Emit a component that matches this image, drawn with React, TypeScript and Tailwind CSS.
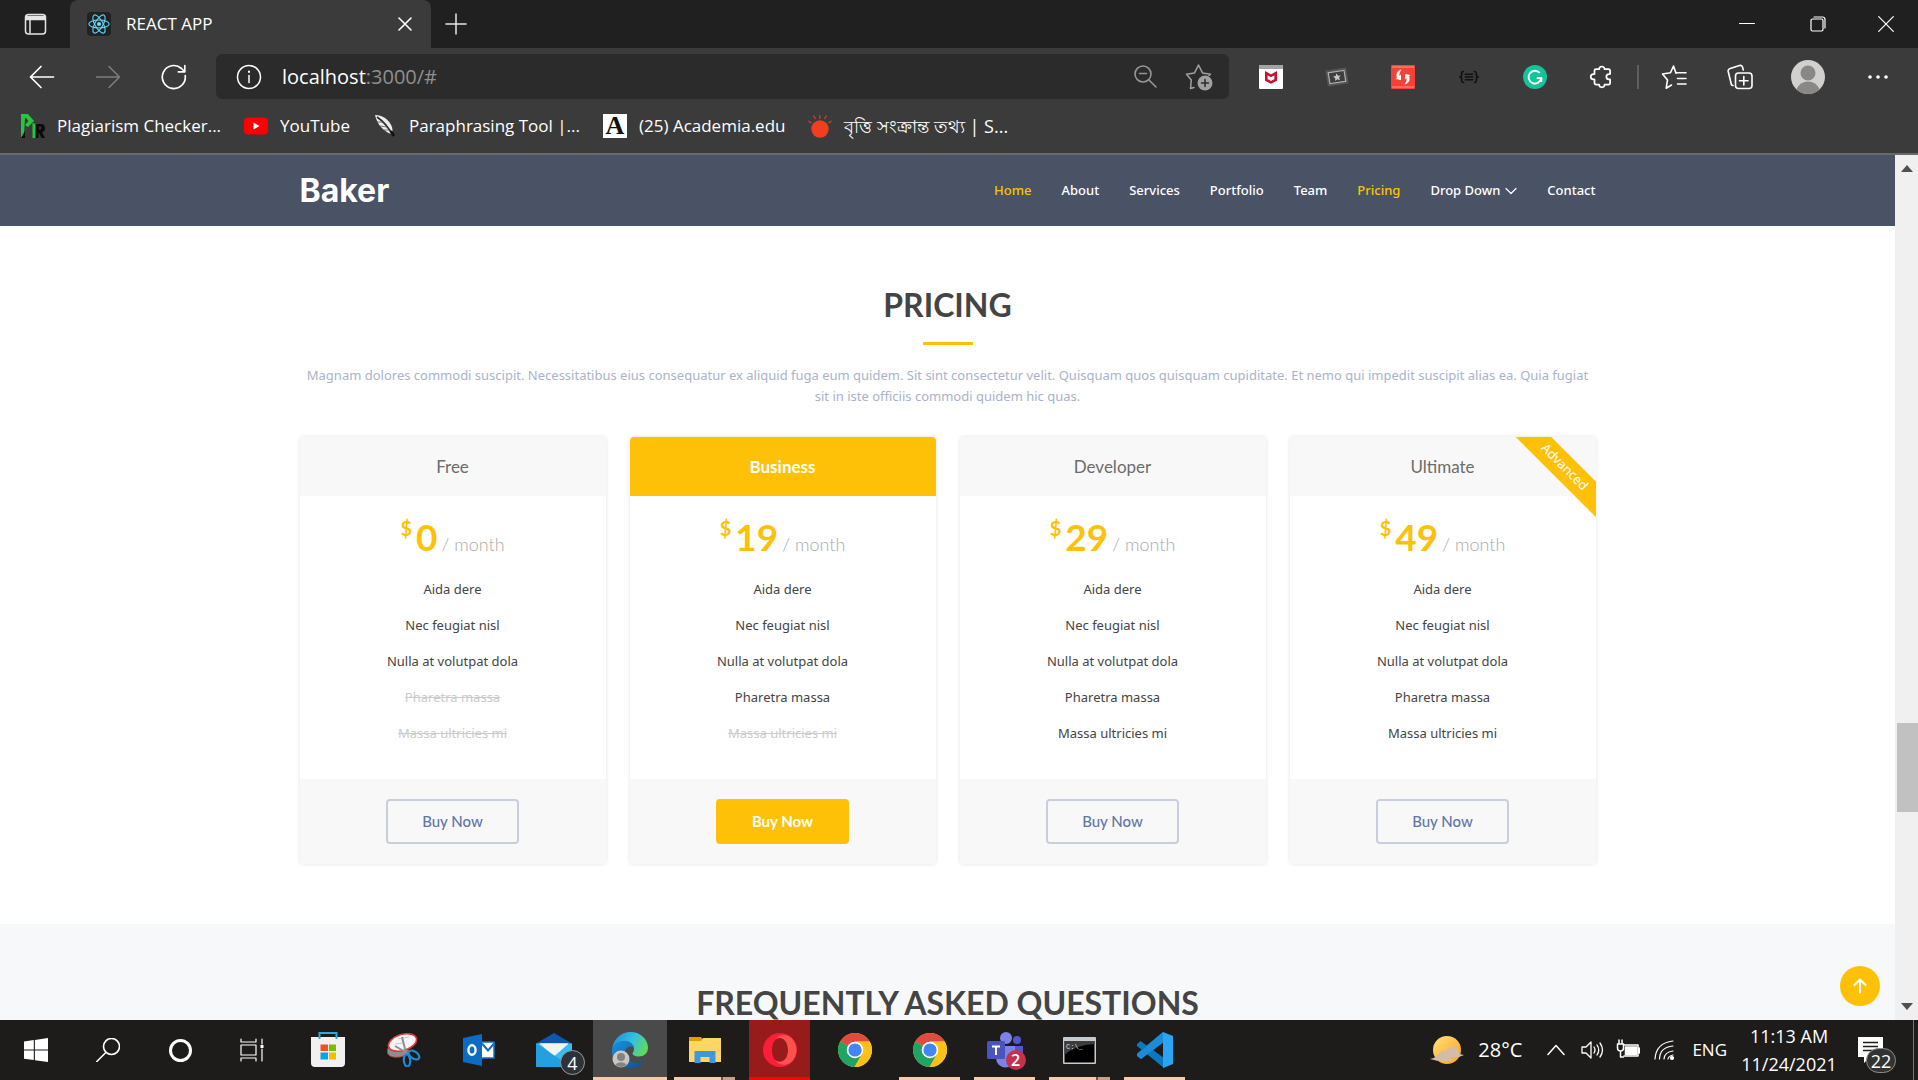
import React from "react";

const UI = "font-['Open_Sans','Noto_Sans',sans-serif]";

/* ---------- browser icons ---------- */

type IconProps = { className?: string; children: React.ReactNode; size?: number; box?: string; w?: number };

function Line({ className = "", children, size = 24, box = "0 0 24 24", w = 1.5 }: IconProps) {
  return (
    <svg aria-hidden="true" className={className} width={size} height={size} viewBox={box} fill="none" stroke="currentColor" strokeWidth={w} strokeLinecap="round" strokeLinejoin="round">
      {children}
    </svg>
  );
}

const ReactLogo = () => (
  <svg aria-hidden="true" width="24" height="24" viewBox="0 0 24 24" className="rounded-sm bg-[#222222]">
    <circle cx="12" cy="12" r="2.1" fill="#61dafb" />
    <g fill="none" stroke="#61dafb" strokeWidth="1.1">
      <ellipse cx="12" cy="12" rx="10.2" ry="4" />
      <ellipse cx="12" cy="12" rx="10.2" ry="4" transform="rotate(60 12 12)" />
      <ellipse cx="12" cy="12" rx="10.2" ry="4" transform="rotate(120 12 12)" />
    </g>
  </svg>
);

function TitleBar() {
  return (
    <div className="flex h-12 shrink-0 items-stretch bg-[#202020] text-white">
      <button aria-label="Tab actions" className="flex w-[70px] items-center justify-center text-[#e6e6e6]">
        <Line size={24} w={1.5}>
          <rect x="2.5" y="2.5" width="20" height="19.5" rx="3" />
          <path d="M3 4.5h19v3H3z" fill="currentColor" />
          <path d="M7 8v13" />
        </Line>
      </button>
      <div className="flex w-[361px] items-center rounded-t-lg bg-[#3b3b3b] pl-[17px] pr-2">
        <ReactLogo />
        <span className="ml-[15px] flex-1 text-[17px]">REACT APP</span>
        <button aria-label="Close tab" className="flex w-9 justify-center">
          <Line size={14} box="0 0 14 14" w={1.6}><path d="M1 1l12 12M13 1L1 13" /></Line>
        </button>
      </div>
      <button aria-label="New tab" className="flex w-[50px] items-center justify-center text-[#e6e6e6]">
        <Line size={22} box="0 0 22 22" w={1.5}><path d="M11 1v20M1 11h20" /></Line>
      </button>
      <div className="flex-1" />
      <button aria-label="Minimize" className="flex w-[70px] items-center justify-center">
        <Line size={16} box="0 0 16 16" w={1}><path d="M.5 7.5h15" /></Line>
      </button>
      <button aria-label="Restore" className="flex w-[72px] items-center justify-center">
        <Line size={16} box="0 0 16 16" w={1.2}>
          <rect x="1" y="3" width="12" height="12" rx="1.5" />
          <path d="M4 1h8.500a2.500 2.500 0 0 1 2.500 2.500V12" />
        </Line>
      </button>
      <button aria-label="Close" className="flex w-16 items-center justify-center">
        <Line size={16} box="0 0 16 16" w={1.2}><path d="M.7.7l14.600 14.600M15.300.7L.7 15.300" /></Line>
      </button>
    </div>
  );
}

const extensions: { name: string; icon: React.ReactNode }[] = [
  {
    name: "Web advisor",
    icon: (
      <svg aria-hidden="true" width="24" height="24" viewBox="0 0 24 24">
        <rect width="24" height="24" rx="1" fill="#fff" />
        <rect width="24" height="4" rx="1" fill="#a7a2a3" />
        <path d="M7.300 8.200l4.700 2.600 4.700-2.600v6.800L12 17.400 7.300 15z" fill="none" stroke="#c8102e" strokeWidth="2.600" />
      </svg>
    ),
  },
  {
    name: "Bookmark card",
    icon: (
      <svg aria-hidden="true" width="24" height="20" viewBox="0 0 24 20">
        <g transform="rotate(-9 12 10)">
          <rect x="1.500" y="2" width="21" height="16" rx="1" fill="#555" />
          <rect x="4" y="4.500" width="16" height="11" fill="#3d3d3d" stroke="#b0b0b0" strokeWidth="1.200" />
          <path d="M12 6.300l1.200 2.500 2.700.3-2 1.800.6 2.700-2.500-1.400-2.400 1.400.5-2.700-2-1.800 2.700-.3z" fill="#c8c8c8" />
        </g>
      </svg>
    ),
  },
  {
    name: "Paraphraser",
    icon: (
      <svg aria-hidden="true" width="24" height="24" viewBox="0 0 24 24">
        <rect width="24" height="24" rx="1" fill="#f44336" />
        <path d="M1 2h22M1 22h22" stroke="#f9988f" />
        <path d="M10.500 4.500C6 5.500 4.500 9.500 6 13l-1.500 1 5.500 1V9.500L8.600 11C8 8.500 9 6.500 10.500 4.500z" fill="#fff" />
        <path d="M13.500 19.500c4.500-1 6-5 4.500-8.500l1.500-1-5.500-1v5.500l1.400-1.500c.6 2.500-.4 4.500-1.900 6.500z" fill="#fff" />
      </svg>
    ),
  },
  {
    name: "JSON viewer",
    icon: (
      <Line size={22} w={1.8} className="text-[#111111]">
        <path d="M6 6c-2 0-2 1-2 3s-.5 3-2 3c1.500 0 2 1 2 3s0 3 2 3M18 6c2 0 2 1 2 3s.5 3 2 3c-1.500 0-2 1-2 3s0 3-2 3M8 9h8M8 12h8M8 15h8" />
      </Line>
    ),
  },
  {
    name: "Writing assistant",
    icon: (
      <svg aria-hidden="true" width="24" height="24" viewBox="0 0 24 24">
        <circle cx="12" cy="12" r="12" fill="#15c39a" />
        <path d="M16.800 8A6.400 6.400 0 1 0 18.300 13h-4.600M18.300 12.600V17" fill="none" stroke="#fff" strokeWidth="1.900" />
      </svg>
    ),
  },
  {
    name: "Extensions",
    icon: (
      <Line size={26} w={1.6}>
        <path d="M7.500 4.800h2.800a2.500 2.500 0 0 1 5 0h3.600a1.500 1.500 0 0 1 1.500 1.500v3h-1a2.400 2.400 0 0 0 0 4.900h1v3.300a1.500 1.500 0 0 1-1.500 1.500h-3.600a2.500 2.500 0 0 1-5 0H7.500A1.500 1.500 0 0 1 6 17.500v-3.300H5a2.400 2.400 0 0 1 0-4.900h1v-3a1.500 1.500 0 0 1 1.500-1.500z" />
      </Line>
    ),
  },
];

function Toolbar() {
  const btn = "flex w-[66px] items-center justify-center";
  return (
    <div className="flex h-[57px] shrink-0 items-center bg-[#3b3b3b] pl-[9px] pr-[5px] text-white">
      <button aria-label="Back" className={btn}>
        <Line size={26} box="0 0 26 26" w={1.700}><path d="M24.500 13H1.500M12 2.500L1.500 13 12 23.500" /></Line>
      </button>
      <button aria-label="Forward" className={btn + " text-[#7d7d7d]"}>
        <Line size={26} box="0 0 26 26" w={1.600}><path d="M1.500 13h23M14 2.500L24.500 13 14 23.500" /></Line>
      </button>
      <button aria-label="Refresh" className={btn}>
        <Line size={26} box="0 0 26 26" w={1.700}><path d="M24.200 11.500A11.500 11.500 0 1 1 20.500 4.500L23.500 7.500M23.800 1.500v6.300h-6.500" /></Line>
      </button>
      <div className="ml-[9px] mr-[9px] flex h-[45px] flex-1 items-center rounded-md bg-[#2b2b2b] pl-5 pr-4">
        <Line size={26} box="0 0 26 26" w={1.500}><circle cx="13" cy="13" r="11.500" /><path d="M13 11.500v7" /><path d="M13 7.500v.6" strokeWidth="2" /></Line>
        <span className="ml-5 flex-1 text-[20px] text-[#8f8f8f]"><span className="text-white">localhost</span>:3000/#</span>
        <button aria-label="Zoom" className="mr-7 text-[#969696]">
          <Line size={26} box="0 0 26 26" w={1.600}><circle cx="12" cy="10" r="8" /><path d="M18 16l7 7M8.500 9.500h7" /></Line>
        </button>
        <button aria-label="Add to favourites" className="text-[#a0a0a0]">
          <Line size={28} box="0 0 28 28" w={1.500}>
            <path d="M9 24.500l-3.500 1 .8-8.500L1.500 11.200l8-1.300L13.500 2l4 7.900 8 1.300-1.500 1.300" />
            <circle cx="20" cy="20" r="7.500" fill="currentColor" stroke="none" />
            <path d="M20 16.500v7M16.500 20h7" stroke="#2b2b2b" />
          </Line>
        </button>
      </div>
      {extensions.map((e) => (
        <button key={e.name} aria-label={e.name} className={btn}>{e.icon}</button>
      ))}
      <div className="flex w-[7px] justify-center"><div className="h-6 w-0.5 bg-[#5f5f5f]" /></div>
      <button aria-label="Favourites" className={btn}>
        <Line size={26} box="0 0 26 26" w={1.600}>
          <path d="M15 9.200L12.500 2 9.500 8.800 1.500 10l5 6-1.300 8.200 5.300-3.200M15.500 8.800H25M16.500 14.500H25M16.500 20H25" />
        </Line>
      </button>
      <button aria-label="Collections" className={btn}>
        <Line size={26} box="0 0 26 26" w={1.600}>
          <rect x="8.500" y="9" width="16.500" height="15.500" rx="3" />
          <path d="M16.800 12.500v8.500M12.500 16.800h8.500M6 21.500L4.500 21 1.200 7.500a2.500 2.500 0 0 1 2-3L12.500 1.500a2.500 2.500 0 0 1 3 1.500l.8 3" />
        </Line>
      </button>
      <button aria-label="Profile" className="flex w-[70px] items-center justify-center">
        <svg aria-hidden="true" width="34" height="34" viewBox="0 0 34 34">
          <defs><clipPath id="avatar"><circle cx="17" cy="17" r="17" /></clipPath></defs>
          <g clipPath="url(#avatar)">
            <rect width="34" height="34" fill="#d2d0ce" />
            <circle cx="17" cy="13" r="7.500" fill="#8a8886" />
            <circle cx="17" cy="34" r="12.500" fill="#8a8886" />
          </g>
        </svg>
      </button>
      <button aria-label="Settings and more" className="flex w-[70px] items-center justify-center">
        <svg aria-hidden="true" width="20" height="4" viewBox="0 0 20 4" fill="#fff"><circle cx="2" cy="2" r="1.800" /><circle cx="10" cy="2" r="1.800" /><circle cx="18" cy="2" r="1.800" /></svg>
      </button>
    </div>
  );
}

const bookmarks: { label: string; large?: boolean; icon: React.ReactNode }[] = [
  {
    label: "Plagiarism Checker...",
    icon: (
      <svg aria-hidden="true" width="24" height="24" viewBox="0 0 24 24">
        <path d="M0 0h7l6 7-6 6-3-2 3.500-4L5 4H4l-1 16-3 4z" fill="#27c53f" />
        <path d="M0 24l4-7v7zM14 24V10h6q4 0 4 4t-3 4l3 6h-3.500l-3-6v6z" fill="#0c0c0c" fillRule="evenodd" />
        <path d="M18 12.500h2v3h-2z" fill="#3b3b3b" />
        <path d="M11.500 9l3 1v14h-3z" fill="#27c53f" />
      </svg>
    ),
  },
  {
    label: "YouTube",
    icon: (
      <svg aria-hidden="true" width="24" height="24" viewBox="0 0 24 24"><rect y="3.500" width="24" height="17" rx="4" fill="#f00" /><path d="M9.500 8.500l6 3.500-6 3.500z" fill="#fff" /></svg>
    ),
  },
  {
    label: "Paraphrasing Tool |...",
    icon: (
      <svg aria-hidden="true" width="24" height="24" viewBox="0 0 24 24">
        <path d="M2 1c7 0 14 4 17 12l1 6-2 1C10 17 4 10 2 1z" fill="#ededed" />
        <path d="M4 3c6 4 11 9 16 19" fill="none" stroke="#2a2a2a" strokeWidth="1.700" />
        <path d="M4 8l7 0M7 12l7 1M11 16h5" stroke="#555" strokeWidth=".8" />
        <path d="M18 17l3 5" stroke="#111" strokeWidth="2.500" />
      </svg>
    ),
  },
  {
    label: "(25) Academia.edu",
    icon: <span aria-hidden="true" className="flex h-6 w-6 items-center justify-center bg-white font-['Liberation_Serif',serif] text-[26px] leading-6 font-bold text-[#111111]">A</span>,
  },
  {
    label: "বৃত্তি সংক্রান্ত তথ্য | S...",
    large: true,
    icon: (
      <svg aria-hidden="true" width="24" height="24" viewBox="0 0 24 24"><circle cx="12" cy="15" r="8.700" fill="#f03e1f" /><path d="M11.800 5V1M7.500 5L5.500 1.500M16.500 5l2-3.500M3.500 9L.5 7M20.500 9l3-2" stroke="#d9402a" strokeWidth="1.200" /></svg>
    ),
  },
];

function Bookmarks() {
  return (
    <div className="flex h-[50px] shrink-0 items-start gap-[23px] border-b-2 border-[#6a6a6a] bg-[#3b3b3b] pl-[21px] pt-[9px] leading-6 text-white">
      {bookmarks.map((b) => (
        <a key={b.label} href="#" className="flex items-center gap-3 whitespace-nowrap">
          {b.icon}
          <span className={b.large ? "text-[18px]" : "text-[17px]"}>{b.label}</span>
        </a>
      ))}
    </div>
  );
}

/* ---------- web page ---------- */

const links = ["Home", "About", "Services", "Portfolio", "Team", "Pricing", "Drop Down", "Contact"];

function SiteNav() {
  return (
    <header className="bg-[#4a5265]">
      <div className="mx-auto flex h-[71px] max-w-[1320px] items-center justify-between px-3">
        <a href="#" className="font-['Inter',sans-serif] text-[32px] leading-9 font-bold text-white">Baker</a>
        <nav className="flex items-center gap-[30px] text-[13px] font-medium">
          {links.map((l) => (
            <a key={l} href="#" className={l === "Home" || l === "Pricing" ? "text-[#ffc107]" : "flex items-center gap-[5px] text-white"}>
              {l}
              {l === "Drop Down" && <Line size={12} box="0 0 12 12" w={1.200}><path d="M1 3.500l5 5 5-5" /></Line>}
            </a>
          ))}
        </nav>
      </div>
    </header>
  );
}

function SectionTitle({ children }: { children: React.ReactNode }) {
  return (
    <div className="flex flex-col items-center">
      <h2 className="font-['Lato',sans-serif] text-[32px] leading-[38px] font-bold text-[#444444]">{children}</h2>
      <div className="mt-[18px] h-[3px] w-[50px] bg-[#ffc107]" />
    </div>
  );
}

const features = ["Aida dere", "Nec feugiat nisl", "Nulla at volutpat dola", "Pharetra massa", "Massa ultricies mi"];
const plans = [
  { name: "Free", price: 0, included: 3, featured: false, ribbon: "" },
  { name: "Business", price: 19, included: 4, featured: true, ribbon: "" },
  { name: "Developer", price: 29, included: 5, featured: false, ribbon: "" },
  { name: "Ultimate", price: 49, included: 5, featured: false, ribbon: "Advanced" },
];

function PlanCard({ plan }: { plan: (typeof plans)[number] }) {
  return (
    <article className="relative overflow-hidden rounded bg-white text-center shadow-[0_0_4px_rgba(0,0,0,0.12)]">
      <h3 className={"font-['Lato',sans-serif] text-[17px] leading-[59px] " + (plan.featured ? "bg-[#ffc107] font-bold text-white" : "bg-[#f8f8f8] font-normal text-[#6c6c6c]")}>
        {plan.name}
      </h3>
      <p className="mt-5 flex h-[43px] items-baseline justify-center font-['Lato',sans-serif] leading-[41px] text-[#ffc107]">
        <span className="mr-1 self-start text-[20px] leading-[24px] font-bold">$</span>
        <span className="text-[37px] font-bold">{plan.price}</span>
        <span className="ml-1 text-[18px] font-light text-[#aaaaaa]">/ month</span>
      </p>
      <ul className="mt-5 text-[13px] leading-5 text-[#444444]">
        {features.map((f, i) => (
          <li key={f} className={i < plan.included ? "pb-4" : "pb-4 text-[#cccccc] line-through"}>{f}</li>
        ))}
      </ul>
      <div className="mt-5 flex justify-center bg-[#f8f8f8] py-5">
        <button className={"h-[45px] w-[133px] rounded border-2 font-['Lato',sans-serif] text-[15px] " + (plan.featured ? "border-[#ffc107] bg-[#ffc107] font-bold text-white" : "border-[#c8cede] font-medium text-[#6177a8]")}>
          Buy Now
        </button>
      </div>
      {plan.ribbon && (
        <span className="absolute top-[18px] -right-[68px] w-[200px] rotate-45 bg-[#ffc107] pt-px pb-[3px] text-[13px] leading-[21px] text-white">{plan.ribbon}</span>
      )}
    </article>
  );
}

function Page() {
  return (
    <main className="relative min-w-0 flex-1 overflow-hidden bg-white font-['Noto_Sans','Open_Sans',sans-serif]">
      <SiteNav />
      <section className="mx-auto max-w-[1320px] px-3 py-[60px]">
        <SectionTitle>PRICING</SectionTitle>
        <p className="mt-5 mb-[30px] text-center text-[13px] leading-[21px] text-[#aab3c9]">
          Magnam dolores commodi suscipit. Necessitatibus eius consequatur ex aliquid fuga eum quidem. Sit sint consectetur velit. Quisquam quos quisquam cupiditate. Et nemo qui impedit suscipit alias ea. Quia fugiat sit in iste officiis commodi quidem hic quas.
        </p>
        <div className="grid grid-cols-4 gap-6">
          {plans.map((p) => <PlanCard key={p.name} plan={p} />)}
        </div>
      </section>
      <section className="bg-[#f6f8fa] py-[60px]">
        <SectionTitle>FREQUENTLY ASKED QUESTIONS</SectionTitle>
      </section>
      <a href="#" aria-label="Back to top" className="absolute right-[15px] bottom-[14px] flex h-10 w-10 items-center justify-center rounded-full bg-[#ffc107] text-white">
        <Line size={16} box="0 0 16 16" w={2}><path d="M8 14.500v-13M2.500 7L8 1.500 13.500 7" /></Line>
      </a>
    </main>
  );
}

function ScrollBar() {
  return (
    <div className="flex w-[23px] shrink-0 flex-col items-center bg-[#f0f0f0] py-[10px]">
      <svg aria-hidden="true" width="12" height="7" viewBox="0 0 12 7"><path d="M6 0l6 7H0z" fill="#505050" /></svg>
      <div className="flex-[551]" />
      <div className="w-[21px] flex-[89] self-end bg-[#c1c1c1]" />
      <div className="flex-[191]" />
      <svg aria-hidden="true" width="12" height="7" viewBox="0 0 12 7"><path d="M0 0h12L6 7z" fill="#505050" /></svg>
    </div>
  );
}

/* ---------- taskbar ---------- */

const Chrome = () => (
  <svg aria-hidden="true" width="34" height="34" viewBox="0 0 34 34">
    <circle cx="17" cy="17" r="17" fill="#fbc116" />
    <path d="M17 17L2.300 8.500A17 17 0 0 1 31.700 8.500H17z" fill="#e04a3f" />
    <path d="M17 17L2.300 8.500A17 17 0 0 0 16.500 34l7.500-13z" fill="#1fa463" />
    <path d="M17 8.500h14.700A17 17 0 0 1 16.500 34L24 21z" fill="#fbc116" />
    <circle cx="17" cy="17" r="8.300" fill="#fff" />
    <circle cx="17" cy="17" r="6.600" fill="#4285f4" />
  </svg>
);

const MiniBadge = ({ children, className }: { children: React.ReactNode; className: string }) => (
  <span className={"absolute flex h-[25px] items-center justify-center rounded-full text-[18px] leading-none font-medium text-white " + className}>{children}</span>
);

function StartSide() {
  const btn = "flex w-[72px] items-center justify-center";
  return (
    <>
      <button aria-label="Start" className={btn}>
        <svg aria-hidden="true" width="24" height="24" viewBox="0 0 24 24" fill="#fff"><path d="M0 3.400L9.800 2v9.500H0zM10.900 1.900L24 0v11.500H10.900zM0 12.600h9.800V22L0 20.700zM10.900 12.600H24V24l-13.100-1.800z" /></svg>
      </button>
      <button aria-label="Search" className={btn + " text-white"}>
        <Line size={24} w={1.600}><circle cx="15.500" cy="8.500" r="8" /><path d="M9.800 14.500L.8 23.500" /></Line>
      </button>
      <button aria-label="Cortana" className={btn}><span className="h-[23px] w-[23px] rounded-full border-[3px] border-white" /></button>
      <button aria-label="Task view" className={btn + " text-white"}>
        <Line size={24} w={1.200}><path d="M1 1v3h15V1M1 23v-3h15v3M1 7h15v10H1zM22 1v5M22 11v12" /><path d="M20.500 7h3v3h-3z" fill="currentColor" stroke="none" /></Line>
      </button>
    </>
  );
}

type TaskbarApp = { name: string; icon: React.ReactNode; tile: string; bar: string; split?: boolean };

const apps: TaskbarApp[] = [
  {
    name: "Store", tile: "w-20", bar: "",
    icon: (
      <svg aria-hidden="true" width="36" height="36" viewBox="0 0 36 36">
        <path d="M1 5h34v26a4 4 0 0 1-4 4H5a4 4 0 0 1-4-4z" fill="#f1f1f1" />
        <path d="M9.500 7V1h17v6" fill="none" stroke="#29a9ea" strokeWidth="2" />
        <path d="M10.500 12.500H18V19h-7.500z" fill="#f25022" /><path d="M19 12.500h7V19h-7z" fill="#7fba00" />
        <path d="M10.500 20.500H18v7h-7.500z" fill="#00a4ef" /><path d="M19 20.500h7v7h-7z" fill="#ffb900" />
      </svg>
    ),
  },
  {
    name: "Snipping tool", tile: "w-[72px]", bar: "",
    icon: (
      <svg aria-hidden="true" width="34" height="34" viewBox="0 0 34 34">
        <path d="M1 15q-2 6 2 8t10 1 9-7l-6-1z" fill="#8d8d8d" stroke="#b34444" strokeWidth=".8" />
        <ellipse cx="15.500" cy="9.500" rx="14.500" ry="8" fill="#f6f6f6" stroke="#e03a3a" strokeWidth="1.600" transform="rotate(-17 15.500 9.500)" />
        <path d="M11 6l11-2M8 11l9-1" stroke="#c9c9c9" />
        <path d="M15 4l4 16M8 13l14 8" stroke="#8b9096" strokeWidth="2" />
        <g fill="none" stroke="#1e88d2" strokeWidth="2.200"><ellipse cx="27" cy="22" rx="6" ry="3.500" transform="rotate(35 27 22)" /><ellipse cx="20" cy="27.500" rx="3.200" ry="6" transform="rotate(-5 20 27.500)" /></g>
      </svg>
    ),
  },
  {
    name: "Outlook", tile: "w-[78px]", bar: "",
    icon: (
      <svg aria-hidden="true" width="32" height="32" viewBox="0 0 32 32">
        <rect x="18" y="8" width="13" height="16" fill="#fff" stroke="#0f6fc6" strokeWidth="1.500" />
        <path d="M19 9.500l6 7 6.500-7.500" fill="none" stroke="#0f6fc6" strokeWidth="2" />
        <path d="M0 4l19-4v32L0 28z" fill="#0a6cc4" />
        <ellipse cx="9" cy="16" rx="3.600" ry="4.800" fill="none" stroke="#fff" strokeWidth="2.400" />
      </svg>
    ),
  },
  {
    name: "Mail", tile: "mr-[3px] w-[72px]", bar: "",
    icon: (
      <span className="relative">
        <svg aria-hidden="true" width="36" height="34" viewBox="0 0 36 34">
          <path d="M0 10.500L18 0l18 10.500v5H0z" fill="#0b58ae" />
          <path d="M0 10.500h36V34H0z" fill="#38bdf0" />
          <path d="M3.500 10.500h29L18 23z" fill="#f3f3f3" />
          <path d="M0 10.500L36 34H0z" fill="#249fe0" />
          <path d="M3.500 10.500h29L19 22.500z" fill="#f3f3f3" />
        </svg>
        <MiniBadge className="top-[17px] left-[24px] w-[25px] border border-[#999999] bg-[#2b3338]">4</MiniBadge>
      </span>
    ),
  },
  {
    name: "Edge", tile: "w-[74px] bg-[#4a4a4a]", bar: "w-full bg-[#fcc8a6]",
    icon: (
      <svg aria-hidden="true" width="36" height="36" viewBox="0 0 36 36">
        <defs>
          <linearGradient id="edgeTop" x1="0" x2="1" y1=".2" y2=".6"><stop offset="0" stopColor="#1d8fdc" /><stop offset=".55" stopColor="#35c1de" /><stop offset="1" stopColor="#5fdc55" /></linearGradient>
          <linearGradient id="edgeLow" x1="0" x2="1" y1="0" y2="1"><stop offset="0" stopColor="#1b92e0" /><stop offset="1" stopColor="#0c4d95" /></linearGradient>
        </defs>
        <path d="M0 18C1 7 9 0 18.500 0 29 0 36 8 36 15.500c0 6-4.500 9-9 9-4 0-6.500-1.500-6.500-3 0-1 1.500-1.500 1.500-4.500 0-4-4-8-9.500-8C6 9 1 13 0 18z" fill="url(#edgeTop)" />
        <path d="M0 18C1 13 6 9 12.500 9c5 0 8.500 3 9.400 6C16 13 13 17 13 21c0 6 6 10.500 12 10 3 0 6-1 8-2.500C30 33 25 36 19 36 8 36-1 28 0 18z" fill="url(#edgeLow)" />
        <circle cx="9" cy="27" r="8.500" fill="#c9c7c5" /><circle cx="9" cy="25" r="4" fill="#85827f" /><path d="M3.500 33a6 4.500 0 0 1 11 0 8.500 8.500 0 0 1-11 0z" fill="#85827f" />
      </svg>
    ),
  },
  {
    name: "File Explorer", tile: "w-[75px]", bar: "w-[61px] bg-[#fcc8a6]", split: true,
    icon: (
      <svg aria-hidden="true" width="32" height="28" viewBox="0 0 32 28">
        <path d="M0 1h12l2 3v4H0z" fill="#e0a100" /><path d="M0 5h12l2-3h18v24H0z" fill="#fdd663" />
        <path d="M5.500 15h21v12h-6v-6h-9v6h-6z" fill="#3d9ad9" />
      </svg>
    ),
  },
  {
    name: "Opera", tile: "w-[75px]", bar: "w-[61px] bg-[#ff0000]",
    icon: (
      <svg aria-hidden="true" width="34" height="34" viewBox="0 0 34 34">
        <path d="M17 0a17 17 0 1 0 0 34 17 17 0 1 0 0-34zm0 5c5 0 8 5 8 12s-3 12-8 12-8-5-8-12 3-12 8-12z" fill="#fa1e3a" fillRule="evenodd" />
        <path d="M13 6C17-1 25 2 28 4.500a17 17 0 0 1 0 25C24 32 17 34 12 27c5 4 13 1 13-10S17 3 13 6z" fill="#ff5050" />
      </svg>
    ),
  },
  { name: "Chrome", tile: "w-[75px]", bar: "", icon: <Chrome /> },
  { name: "Chrome window", tile: "w-[75px]", bar: "w-[61px] bg-[#fcc8a6]", icon: <Chrome /> },
  {
    name: "Teams", tile: "w-[75px]", bar: "w-[61px] bg-[#fcc8a6]",
    icon: (
      <span className="relative">
        <svg aria-hidden="true" width="36" height="36" viewBox="0 0 36 36">
          <circle cx="19" cy="6" r="6" fill="#7b83eb" /><circle cx="30" cy="8" r="4" fill="#5059c9" />
          <path d="M23 14h13v10a7 7 0 0 1-13 3z" fill="#5059c9" /><path d="M9 14h19v12a9.500 9.500 0 0 1-19 0z" fill="#7b83eb" />
          <rect y="9" width="18" height="18" rx="1.500" fill="#4b53bc" />
          <path d="M5 13.500h8v2h-3V23H8v-7.500H5z" fill="#fff" />
        </svg>
        <span className="absolute top-[18px] left-[19px] flex h-5 w-5 items-center justify-center rounded-full bg-[#c4314b] text-[16px] leading-none font-semibold text-white">2</span>
      </span>
    ),
  },
  {
    name: "Command Prompt", tile: "w-[75px]", bar: "w-[61px] bg-[#fcc8a6]", split: true,
    icon: (
      <svg aria-hidden="true" width="33" height="27" viewBox="0 0 33 27">
        <rect width="33" height="27" rx="1" fill="#c4ccd0" /><rect x="1.500" y="4" width="30" height="21.500" fill="#000" />
        <path d="M1.500 4h30v3Q12 8 1.500 18z" fill="#3c3c3c" />
        <text x="3" y="12" fill="#ddd" fontSize="7" fontFamily="Liberation Mono, monospace">C:\_</text>
      </svg>
    ),
  },
  {
    name: "Visual Studio Code", tile: "w-[75px]", bar: "w-[61px] bg-[#fcc8a6]",
    icon: (
      <svg aria-hidden="true" width="36" height="36" viewBox="0 0 36 36">
        <path d="M26 0v10L4 27l-4-3.500v-2z" fill="#1583ce" /><path d="M0 12l3.500-3L27 26v10L0 14z" fill="#0b78c2" />
        <path d="M0 22.500L26 0l1 10-23 17-4-3z" fill="#1c8cd9" />
        <path d="M26 0l10 4v28l-10 4z" fill="#2ba5f2" />
      </svg>
    ),
  },
];

function Tray() {
  return (
    <div className="flex items-center text-white">
      <svg aria-hidden="true" width="34" height="30" viewBox="0 0 34 30">
        <defs><linearGradient id="sun" x1="0" y1="0" x2="1" y2="1"><stop offset="0" stopColor="#ffe27a" /><stop offset="1" stopColor="#ff9d1c" /></linearGradient></defs>
        <circle cx="17" cy="15" r="14" fill="url(#sun)" />
        <path d="M8 20q3-6 8-4 3-6 9-4 4 2 4 7l5 1q-8 4-14 2 2 3 6 3-14 3-26-1 5-1 8-4z" fill="#d3bda5" />
      </svg>
      <span className="ml-3.5 mr-2.5 text-[20px]">28°C</span>
      <button aria-label="Show hidden icons" className="flex w-12 justify-center"><Line size={18} box="0 0 18 10" w={1.500}><path d="M1 9.500L9 .5l8 9" /></Line></button>
      <div className="flex items-center gap-3">
        <Line size={24} w={1.300}><path d="M2 9h4l5-5v16l-5-5H2zM14 9q2 3 0 6M17 7q3.500 5 0 10M20 5q5 7 0 14" /></Line>
        <Line size={24} w={1.500}>
          <path d="M8 7h14v11H8M23.300 10v5" /><path d="M9.500 9h11v7.500h-11z" fill="currentColor" />
          <path d="M1.500 6h6v4a3 3 0 0 1-6 0zM3 6V2M6 6V2M4.500 13v6h3" />
        </Line>
        <Line size={24} w={1.200}><path d="M3 21Q4 5 21 3M7.500 21Q8 9 21 8M12 21q.5-7 9-8M16 21q.5-3 5-4" /><circle cx="20" cy="20" r="1.500" fill="currentColor" /></Line>
      </div>
      <span className="ml-4 text-[17px]">ENG</span>
      <div className="ml-3 w-[100px] text-center text-[18px] leading-7"><div>11:13 AM</div><div>11/24/2021</div></div>
      <button aria-label="Notifications" className="relative ml-[19px] mr-[30px] h-[26px] w-[25px]">
        <svg aria-hidden="true" width="25" height="26" viewBox="0 0 25 26"><path d="M0 0h25v20H12l-6 6v-6H0z" fill="#fff" /><path d="M5 5.500h15M5 9.500h15M5 13.500h15" stroke="#1d1c1b" strokeWidth="1.300" /></svg>
        <MiniBadge className="top-[11px] left-[8px] w-[30px] border border-[#8c8c8c] bg-[#333333]">22</MiniBadge>
      </button>
      <div className="mr-1 h-[60px] w-px bg-[#777777]" />
    </div>
  );
}

function Taskbar() {
  return (
    <footer className="flex h-[60px] shrink-0 items-stretch bg-[#1d1c1b]">
      <StartSide />
      <div className="flex min-w-0 flex-1 items-stretch">
        {apps.map((a) => (
          <button key={a.name} aria-label={a.name} className={"relative flex shrink-0 items-center justify-center " + a.tile}>
            {a.name === "Opera" && <span className="absolute inset-y-0 w-[61px] bg-[#971b1b]" />}
            <span className="relative flex">{a.icon}</span>
            {a.bar && (
              <span className={"absolute bottom-0 flex h-[3px] justify-end " + a.bar}>{a.split && <span className="w-3.5 border-l-2 border-[#6b5648] bg-[#c9a087]" />}</span>
            )}
          </button>
        ))}
      </div>
      <Tray />
    </footer>
  );
}

export default function App() {
  return (
    <div className={"flex h-screen flex-col overflow-hidden " + UI}>
      <TitleBar />
      <Toolbar />
      <Bookmarks />
      <div className="flex min-h-0 flex-1">
        <Page />
        <ScrollBar />
      </div>
      <Taskbar />
    </div>
  );
}
